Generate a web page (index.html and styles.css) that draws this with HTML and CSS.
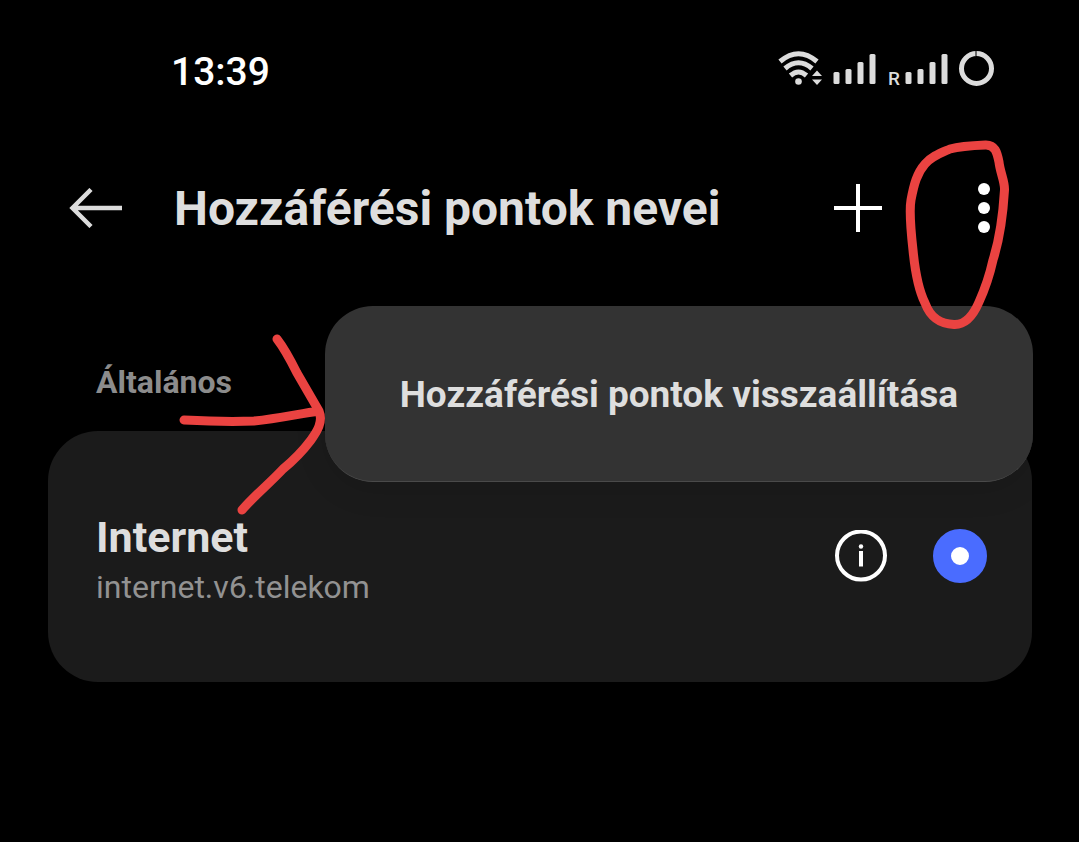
FILE: index.html
```html
<!DOCTYPE html>
<html lang="hu">
<head>
<meta charset="utf-8">
<meta name="viewport" content="width=device-width, initial-scale=1">
<title>Hozzáférési pontok nevei</title>
<link rel="stylesheet" href="styles.css">
</head>
<body>
<div class="screen">
  <div class="status">
    <time class="clock">13:39</time>
    <svg class="status-icons" width="218" height="44" viewBox="777 50 218 44" aria-hidden="true">
      <g fill="none" stroke="#dcdcdc" stroke-width="5">
        <path d="M780 61.500Q798.500 46 817 61.500"/>
        <path d="M785 68.500Q798.500 57 812 68.500"/>
        <path d="M790.500 75.500Q798.500 68.500 806.500 75.500"/>
        <circle cx="976.500" cy="68.500" r="15"/>
      </g>
      <g fill="#dcdcdc">
        <circle cx="798.500" cy="81.500" r="3.300"/>
        <path d="M812 76l5-5.500 5 5.500zM812 79.500h10l-5 5.500z"/>
        <rect x="833.500" y="72" width="6" height="12" rx="1.500"/>
        <rect x="845.500" y="69" width="6" height="15" rx="1.500"/>
        <rect x="857.500" y="62" width="6" height="22" rx="1.500"/>
        <rect x="869.500" y="54" width="6" height="30" rx="1.500"/>
        <text class="roaming" x="888" y="85">R</text>
        <rect x="905.500" y="72" width="6" height="12" rx="1.500"/>
        <rect x="917.500" y="69" width="6" height="15" rx="1.500"/>
        <rect x="929.500" y="62" width="6" height="22" rx="1.500"/>
        <rect x="941.500" y="54" width="6" height="30" rx="1.500"/>
      </g>
      <path d="M976 51v5" stroke="#444" stroke-width="1.500"/>
    </svg>
  </div>

  <header class="header">
    <button class="icon-button" type="button" aria-label="Vissza">
      <svg width="54" height="40" viewBox="0 0 54 40" fill="none" stroke="#dcdcdc" stroke-width="4.500"><path d="M53 20H4M22 1.500L3.500 20 22 38.500"/></svg>
    </button>
    <h1 class="title">Hozzáférési pontok nevei</h1>
    <button class="icon-button" type="button" aria-label="Hozzáadás">
      <svg width="48" height="48" viewBox="0 0 48 48" stroke="#fff" stroke-width="4"><path d="M0 24h48M24 0v48"/></svg>
    </button>
    <div class="more">
      <button class="icon-button" type="button" aria-label="További lehetőségek" aria-expanded="true">
        <svg width="12" height="52" viewBox="0 0 12 52" fill="#fff"><circle cx="6" cy="7" r="6"/><circle cx="6" cy="26" r="6"/><circle cx="6" cy="45" r="6"/></svg>
      </button>
      <div class="menu">
        <button class="menu-item" type="button">Hozzáférési pontok visszaállítása</button>
      </div>
    </div>
  </header>

  <main class="content">
    <h2 class="section-title">Általános</h2>
    <div class="card">
      <label class="apn" for="apn-internet">
        <span class="apn-name">Internet</span>
        <span class="apn-address">internet.v6.telekom</span>
      </label>
      <div class="actions">
        <button class="icon-button" type="button" aria-label="Részletek">
          <svg width="52" height="52" viewBox="0 0 52 52"><circle cx="26" cy="25.500" r="24" fill="none" stroke="#fff" stroke-width="4"/><circle cx="26" cy="16.500" r="2.200" fill="#fff"/><path d="M26 21v15.500" stroke="#fff" stroke-width="4"/></svg>
        </button>
        <input class="radio" id="apn-internet" type="radio" name="apn" checked>
      </div>
    </div>
  </main>

  <svg class="marks" width="840" height="386" viewBox="173 136 840 386" fill="none" stroke="#ea4341" stroke-width="9" stroke-linecap="round" stroke-linejoin="round" aria-hidden="true">
    <path d="M950 149C961 146 974 145.500 986 145C995 145 997 152 999 162C1000 172 1005 182 1004.500 190C1003 215 1000 238 993 260C989 278 984 291 979 302C973 316 965 325 954 324.500C941 324 931 319 925 303C918 289 915 271 913 250C911 232 909 211 911 200C914 184 917 173 925 164C932 156 941 153 950 149Z"/>
    <path d="M277 339C284 348 291 361 297 373L319 411M184 420C203 421 230 422 254 421C277 419 298 414 319 411C324 423 315 434 311 440C302 452 294 460 283 469C270 483 256 494 242 510"/>
  </svg>
</div>
</body>
</html>
```
FILE: styles.css
```css
* {
  box-sizing: border-box;
}

body {
  margin: 0;
  background: #000;
  color: #dedede;
  font-family: Roboto, "Noto Sans", sans-serif;
}

h1,
h2 {
  margin: 0;
}

button {
  padding: 0;
  border: 0;
  background: none;
  color: inherit;
  font: inherit;
  cursor: pointer;
}

.screen {
  position: relative;
  min-height: 100vh;
  padding-top: 46px;
}

.status {
  display: flex;
  align-items: center;
  justify-content: space-between;
  padding: 0 84px 0 171px;
}

.clock {
  color: #fff;
  font-size: 39px;
  font-weight: 500;
  line-height: 52px;
}

.roaming {
  font-size: 19px;
  font-weight: 500;
}

.header {
  display: flex;
  align-items: center;
  margin-top: 80px;
  padding: 0 89px 0 69px;
}

.title {
  flex: 1;
  margin-left: 51px;
  padding-top: 2px;
  font-size: 48px;
  font-weight: 700;
  line-height: 58px;
}

.icon-button {
  display: flex;
}

.more {
  position: relative;
  margin-left: 96px;
}

.menu {
  position: absolute;
  top: 124px;
  right: -43px;
  padding: 65px 75px 62px;
  border-bottom: 1px solid #4a4a4a;
  border-radius: 48px;
  background: #333;
  box-shadow: 0 8px 32px rgba(0, 0, 0, 0.1);
}

.menu-item {
  font-size: 37px;
  font-weight: 700;
  line-height: 48px;
  white-space: nowrap;
}

.content {
  padding: 124px 47px 0 48px;
}

.section-title {
  padding-left: 48px;
  color: #8c8c8c;
  font-size: 32px;
  font-weight: 700;
  line-height: 40px;
}

.card {
  display: flex;
  align-items: flex-start;
  justify-content: space-between;
  margin-top: 29px;
  padding: 80px 45px 71px 48px;
  border-radius: 50px;
  background: #1b1b1b;
}

.apn {
  display: flex;
  flex-direction: column;
}

.apn-name {
  font-size: 43px;
  font-weight: 700;
  line-height: 52px;
}

.apn-address {
  color: #929292;
  font-size: 32px;
  line-height: 48px;
}

.actions {
  display: flex;
  align-items: center;
  gap: 46px;
  margin-top: 18px;
}

.radio {
  appearance: none;
  width: 54px;
  height: 54px;
  margin: 0;
  border: 18px solid #4a6cff;
  border-radius: 50%;
  background: #fff;
}

.marks {
  position: absolute;
  top: 136px;
  right: 66px;
  pointer-events: none;
}
```
